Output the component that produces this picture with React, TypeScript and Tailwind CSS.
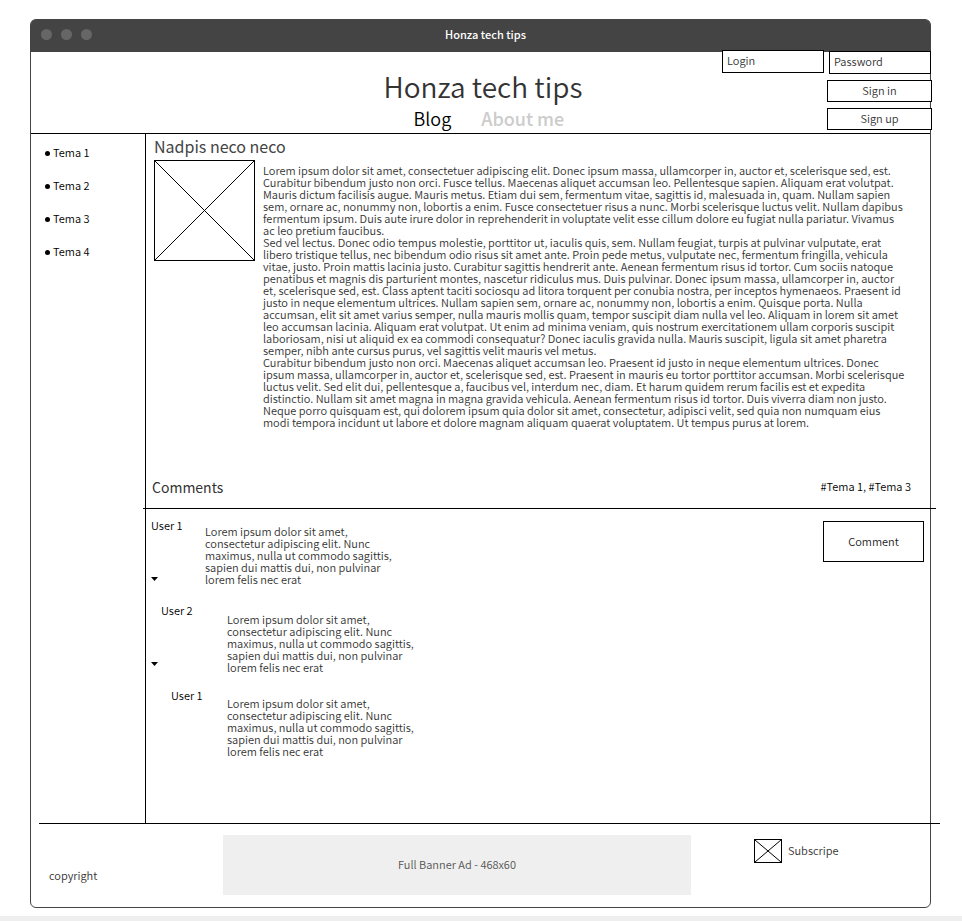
import type { ReactNode } from "react";

const topics = ["Tema 1", "Tema 2", "Tema 3", "Tema 4"];

const paragraphs = [
  "Lorem ipsum dolor sit amet, consectetuer adipiscing elit. Donec ipsum massa, ullamcorper in, auctor et, scelerisque sed, est. Curabitur bibendum justo non orci. Fusce tellus. Maecenas aliquet accumsan leo. Pellentesque sapien. Aliquam erat volutpat. Mauris dictum facilisis augue. Mauris metus. Etiam dui sem, fermentum vitae, sagittis id, malesuada in, quam. Nullam sapien sem, ornare ac, nonummy non, lobortis a enim. Fusce consectetuer risus a nunc. Morbi scelerisque luctus velit. Nullam dapibus fermentum ipsum. Duis aute irure dolor in reprehenderit in voluptate velit esse cillum dolore eu fugiat nulla pariatur. Vivamus ac leo pretium faucibus.",
  "Sed vel lectus. Donec odio tempus molestie, porttitor ut, iaculis quis, sem. Nullam feugiat, turpis at pulvinar vulputate, erat libero tristique tellus, nec bibendum odio risus sit amet ante. Proin pede metus, vulputate nec, fermentum fringilla, vehicula vitae, justo. Proin mattis lacinia justo. Curabitur sagittis hendrerit ante. Aenean fermentum risus id tortor. Cum sociis natoque penatibus et magnis dis parturient montes, nascetur ridiculus mus. Duis pulvinar. Donec ipsum massa, ullamcorper in, auctor et, scelerisque sed, est. Class aptent taciti sociosqu ad litora torquent per conubia nostra, per inceptos hymenaeos. Praesent id justo in neque elementum ultrices. Nullam sapien sem, ornare ac, nonummy non, lobortis a enim. Quisque porta. Nulla accumsan, elit sit amet varius semper, nulla mauris mollis quam, tempor suscipit diam nulla vel leo. Aliquam in lorem sit amet leo accumsan lacinia. Aliquam erat volutpat. Ut enim ad minima veniam, quis nostrum exercitationem ullam corporis suscipit laboriosam, nisi ut aliquid ex ea commodi consequatur? Donec iaculis gravida nulla. Mauris suscipit, ligula sit amet pharetra semper, nibh ante cursus purus, vel sagittis velit mauris vel metus.",
  "Curabitur bibendum justo non orci. Maecenas aliquet accumsan leo. Praesent id justo in neque elementum ultrices. Donec ipsum massa, ullamcorper in, auctor et, scelerisque sed, est. Praesent in mauris eu tortor porttitor accumsan. Morbi scelerisque luctus velit. Sed elit dui, pellentesque a, faucibus vel, interdum nec, diam. Et harum quidem rerum facilis est et expedita distinctio. Nullam sit amet magna in magna gravida vehicula. Aenean fermentum risus id tortor. Duis viverra diam non justo. Neque porro quisquam est, qui dolorem ipsum quia dolor sit amet, consectetur, adipisci velit, sed quia non numquam eius modi tempora incidunt ut labore et dolore magnam aliquam quaerat voluptatem. Ut tempus purus at lorem.",
];

const commentText =
  "Lorem ipsum dolor sit amet, consectetur adipiscing elit. Nunc maximus, nulla ut commodo sagittis, sapien dui mattis dui, non pulvinar lorem felis nec erat";

function CrossBox({ className, label }: { className: string; label: string }) {
  return (
    <div role="img" aria-label={label} className={`shrink-0 border border-black ${className}`}>
      <svg viewBox="0 0 100 100" preserveAspectRatio="none" className="block size-full">
        <path
          d="M0 0 100 100M100 0 0 100"
          fill="none"
          stroke="#000"
          strokeWidth="1"
          vectorEffect="non-scaling-stroke"
        />
      </svg>
    </div>
  );
}

function Comment({
  user,
  userPad,
  textPad,
  children,
}: {
  user: string;
  userPad: string;
  textPad: string;
  children?: ReactNode;
}) {
  return (
    <li className="flex h-[85px]">
      <div className="flex w-[54px] shrink-0 flex-col">
        <span className={`whitespace-nowrap text-black ${userPad}`}>{user}</span>
        {children}
      </div>
      <p className={`leading-3 ${textPad}`}>
        <span className="block w-[192px]">{commentText}</span>
      </p>
    </li>
  );
}

function Toggle() {
  return (
    <button type="button" aria-label="Collapse replies" className="mt-[42px] h-2 w-[7px]">
      <svg viewBox="0 0 7 4" className="block h-1 w-[7px]">
        <path d="M0 0h7L3.5 4z" fill="#000" />
      </svg>
    </button>
  );
}

export default function App() {
  return (
    <div className="bg-white pt-[19px] font-['Noto_Sans_CJK_SC',sans-serif] text-[11px] leading-4 font-[350] text-[#333]">
      <div className="mr-[31px] ml-[30px] rounded-md border border-[#444]">
        <div className="flex h-8 items-center justify-center rounded-t-[4px] bg-[#444] text-white">
          <div className="flex flex-1 gap-[9px] pb-1 pl-[10px]">
            <span className="size-[11px] rounded-full bg-[#666]" />
            <span className="size-[11px] rounded-full bg-[#666]" />
            <span className="size-[11px] rounded-full bg-[#666]" />
          </div>
          <span className="px-3 pb-1 font-medium">Honza tech tips</span>
          <div className="flex-1" />
        </div>

        <header className="grid h-[82px] grid-cols-[minmax(0,1fr)_auto_minmax(0,1fr)] border-b border-black">
          <div />
          <div className="pt-[14px] pl-[5px]">
            <h1 className="text-[28px] leading-10 font-[350]">Honza tech tips</h1>
            <nav className="flex gap-[30px] pl-[30px] text-[18px] leading-6">
              <a href="#blog" className="text-black">
                Blog
              </a>
              <a href="#about" className="font-medium text-[#ccc]">
                About me
              </a>
            </nav>
          </div>
          <form className="-mt-[2px] flex flex-col items-end" onSubmit={(e) => e.preventDefault()}>
            <div className="-mr-[1px] flex items-start gap-[5px]">
              <input
                aria-label="Login"
                placeholder="Login"
                className="h-[23px] w-[102px] border border-black bg-white px-1 pb-[3px] placeholder:text-[#333]"
              />
              <input
                type="password"
                aria-label="Password"
                placeholder="Password"
                className="mt-[1px] h-[23px] w-[102px] border border-black bg-white px-1 pb-[3px] placeholder:text-[#333]"
              />
            </div>
            <button type="submit" className="mt-[6px] -mr-[2px] h-[22px] w-[105px] border border-black bg-white pb-[2px]">
              Sign in
            </button>
            <button type="button" className="mt-[6px] -mr-[2px] h-[22px] w-[105px] border border-black bg-white pb-[2px]">
              Sign up
            </button>
          </form>
        </header>

        <div className="flex">
          <aside className="w-[114px] shrink-0 pt-[10px] pl-[14px]">
            <ul className="flex flex-col gap-[17px] text-black">
              {topics.map((t) => (
                <li key={t} className="flex items-center gap-[3px]">
                  <span className="mt-[3px] size-[5px] rounded-full bg-black" />
                  <a href="#tema">{t}</a>
                </li>
              ))}
            </ul>
          </aside>

          <main className="min-w-0 flex-1 border-l border-black">
            <article className="pr-6 pl-2">
              <h2 className="pb-[2px] text-[16px] leading-6 font-normal text-[#444]">Nadpis neco neco</h2>
              <div className="flex gap-2">
                <CrossBox label="Article picture" className="size-[101px]" />
                <div className="pt-1 leading-3">
                  {paragraphs.map((p) => (
                    <p key={p.slice(0, 24)}>{p}</p>
                  ))}
                </div>
              </div>
            </article>

            <div className="-mr-[6px] -ml-[3px] flex items-center justify-between border-b border-black pt-[47px] pr-[25px] pb-[9px] pl-[9px]">
              <h3 className="text-[14px] leading-6 font-normal">Comments</h3>
              <span className="pb-[2px] text-black">#Tema 1, #Tema 3</span>
            </div>

            <section className="flex items-start justify-between pr-[6px] pb-[51px] pl-[5px]">
              <ul className="pt-2">
                <Comment user="User 1" userPad="" textPad="pt-2">
                  <Toggle />
                </Comment>
                <Comment user="User 2" userPad="pl-[10px]" textPad="pt-[11px] pl-[22px]">
                  <Toggle />
                </Comment>
                <Comment user="User 1" userPad="pl-5" textPad="pt-[10px] pl-[22px]" />
              </ul>
              <button type="button" className="mt-3 h-[41px] w-[101px] border border-black bg-white pb-[2px] text-[#222]">
                Comment
              </button>
            </section>
          </main>
        </div>

        <footer className="-mr-[10px] ml-2 flex h-[84px] items-start border-t border-black pt-[11px]">
          <span className="w-[184px] shrink-0 pt-8 pl-[10px]">copyright</span>
          <div className="flex h-[60px] w-[468px] items-center justify-center bg-[#efefef] pb-[2px] text-[#555]">
            Full Banner Ad - 468x60
          </div>
          <a href="#subscribe" className="ml-[63px] flex items-center gap-[6px] pt-1">
            <CrossBox label="Envelope" className="h-6 w-7" />
            <span className="pb-[2px]">Subscripe</span>
          </a>
        </footer>
      </div>
      <div className="mt-2 h-[5px] bg-[#eee]" />
    </div>
  );
}
